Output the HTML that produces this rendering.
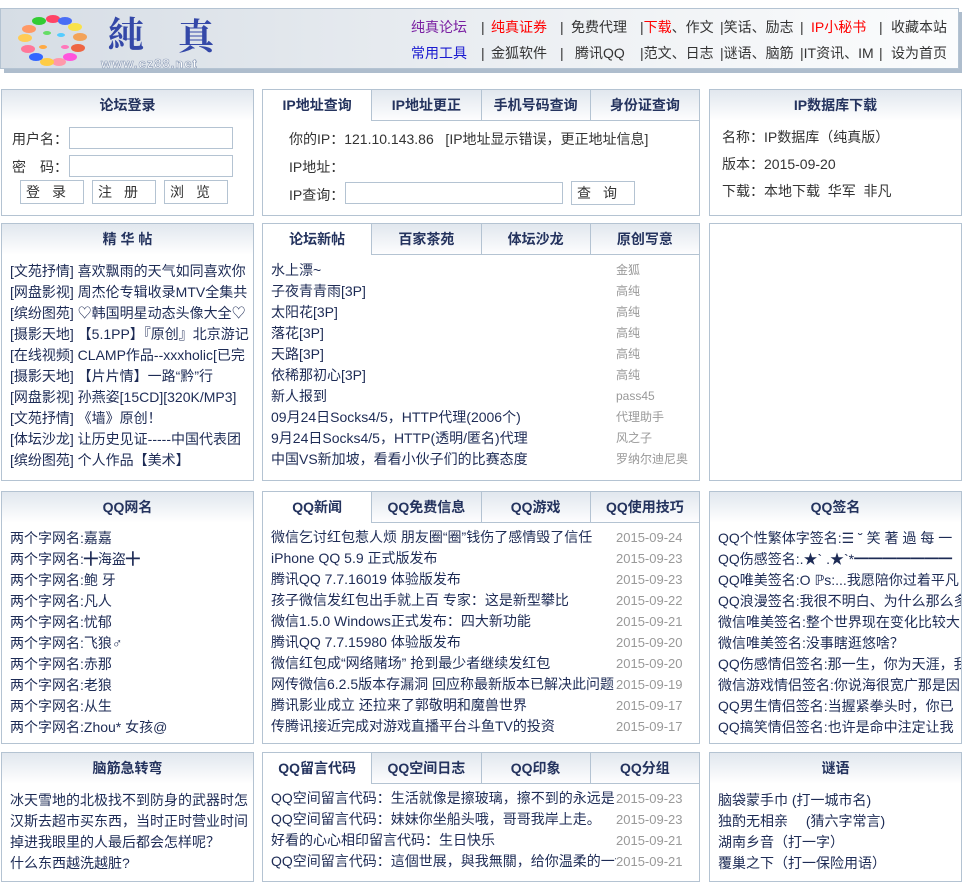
<!DOCTYPE html>
<html><head><meta charset="utf-8"><style>
*{margin:0;padding:0;box-sizing:border-box}
body{width:962px;height:875px;overflow:hidden;background:#fff;font-family:"Liberation Sans","Noto Sans CJK SC",sans-serif;font-size:14px;color:#1d2b55;position:relative}
.p{position:absolute;border:1px solid #b4c3d2;background:#fff;overflow:hidden}
.h{height:31px;line-height:30px;text-align:center;font-weight:bold;font-size:14px;color:#24335e;background:linear-gradient(#e1e7ee,#ffffff)}
.tabs{display:flex;height:31px;border-bottom:1px solid #b4c3d2;background:linear-gradient(#e1e7ee,#fdfdfe)}
.tabs div{flex:1;text-align:center;line-height:30px;font-weight:bold;color:#24335e;border-left:1px solid #b4c3d2}
.tabs div:first-child{border-left:none;background:#fff;margin-bottom:-1px;height:31px;border-right:0}
ul{list-style:none;padding:6px 0 0 8px}
li{height:21px;line-height:21px;white-space:nowrap;overflow:hidden}
.d li{display:flex}
.d li span:first-child{flex:0 0 345px;overflow:hidden}
.d li span:last-child{color:#999;font-size:13px}
.a li span:last-child{font-size:12px}
.hd{position:absolute;left:0;top:8px;width:959px;height:61px;border:1px solid #b4c3d2;background:linear-gradient(90deg,#d6dde5,#eef1f4 60%,#fbfcfd);box-shadow:4px 4px 0 #aebdcd}
.n{position:absolute;font-size:14px;color:#333;line-height:20px;white-space:nowrap}
input.t{position:absolute;height:22px;border:1px solid #b4c3d2;background:#fff}
.b{position:absolute;height:24px;border:1px solid #b4c3d2;background:#fff;text-align:center;line-height:22px;letter-spacing:12px;color:#333}
</style></head><body>
<div class="hd">
<svg width="230" height="60" style="position:absolute;left:12px;top:0">
<g transform="translate(40,32)">
<ellipse cx="0" cy="-22" rx="7" ry="4" fill="#f46"/><ellipse cx="12" cy="-20" rx="7" ry="4" fill="#4a6ef5"/><ellipse cx="22" cy="-14" rx="7" ry="4" fill="#f9e24a"/><ellipse cx="27" cy="-4" rx="7" ry="4" fill="#f3a35a"/><ellipse cx="25" cy="7" rx="7" ry="4" fill="#e64"/><ellipse cx="17" cy="16" rx="7" ry="4" fill="#f5d"/><ellipse cx="6" cy="21" rx="7" ry="4" fill="#f9a"/><ellipse cx="-6" cy="21" rx="7" ry="4" fill="#fc4"/><ellipse cx="-17" cy="16" rx="7" ry="4" fill="#36f"/><ellipse cx="-25" cy="8" rx="7" ry="4" fill="#f79"/><ellipse cx="-28" cy="-3" rx="7" ry="4" fill="#fc5"/><ellipse cx="-24" cy="-12" rx="7" ry="4" fill="#f96"/><ellipse cx="-14" cy="-20" rx="7" ry="4" fill="#3c3"/><ellipse cx="-6" cy="-8" rx="4" ry="2" fill="#6d6"/><ellipse cx="8" cy="-6" rx="4" ry="2" fill="#5cf"/><ellipse cx="12" cy="6" rx="4" ry="2" fill="#f7b"/><ellipse cx="-10" cy="6" rx="4" ry="2" fill="#fa4"/>
</g>
<text x="95" y="38" font-family="Noto Serif CJK SC,serif" font-size="36" font-weight="bold" fill="#3448a8">純</text>
<text x="165" y="40" font-family="Noto Serif CJK SC,serif" font-size="36" font-weight="bold" fill="#3448a8">真</text>
<text x="88" y="59" font-family="Liberation Sans,sans-serif" font-size="13" font-weight="bold" fill="#fff" stroke="#8a9ab5" stroke-width=".6" letter-spacing="1">www.cz88.net</text>
</svg>
</div>
<div class="n" style="top:17px;left:411px;color:#7a1fa2">纯真论坛</div>
<div class="n" style="top:17px;left:481px">|</div>
<div class="n" style="top:17px;left:491px;color:#f00">纯真证券</div>
<div class="n" style="top:17px;left:560px">|</div>
<div class="n" style="top:17px;left:571px">免费代理</div>
<div class="n" style="top:17px;left:640px">|<span style="color:#f00">下载</span>、作文</div>
<div class="n" style="top:17px;left:720px">|笑话、励志</div>
<div class="n" style="top:17px;left:800px">|</div>
<div class="n" style="top:17px;left:811px;color:#f00">IP小秘书</div>
<div class="n" style="top:17px;left:879px">|</div>
<div class="n" style="top:17px;left:891px">收藏本站</div>
<div class="n" style="top:43px;left:411px;color:#1919d0">常用工具</div>
<div class="n" style="top:43px;left:481px">|</div>
<div class="n" style="top:43px;left:491px">金狐软件</div>
<div class="n" style="top:43px;left:560px">|</div>
<div class="n" style="top:43px;left:575px">腾讯QQ</div>
<div class="n" style="top:43px;left:640px">|范文、日志</div>
<div class="n" style="top:43px;left:720px">|谜语、脑筋</div>
<div class="n" style="top:43px;left:800px">|IT资讯、IM</div>
<div class="n" style="top:43px;left:879px">|</div>
<div class="n" style="top:43px;left:891px">设为首页</div>

<!-- row1 -->
<div class="p" style="left:1px;top:89px;width:253px;height:127px"><div class="h">论坛登录</div>
<div style="position:absolute;left:10px;top:35px;line-height:28px;color:#333">用户名：<br>密　码：</div>
<input class="t" style="left:67px;top:37px;width:164px"><input class="t" style="left:67px;top:65px;width:164px">
<div class="b" style="left:18px;top:90px;width:64px">登录</div><div class="b" style="left:90px;top:90px;width:64px">注册</div><div class="b" style="left:162px;top:90px;width:64px">浏览</div></div>

<div class="p" style="left:262px;top:89px;width:438px;height:127px"><div class="tabs"><div>IP地址查询</div><div>IP地址更正</div><div>手机号码查询</div><div>身份证查询</div></div>
<div style="position:absolute;left:26px;top:35px;line-height:28px;color:#333">你的IP：121.10.143.86 &nbsp;&nbsp;[IP地址显示错误，更正地址信息]<br>IP地址：<br>IP查询：</div>
<input class="t" style="left:82px;top:92px;width:218px"><div class="b" style="left:308px;top:91px;width:64px">查询</div></div>

<div class="p" style="left:709px;top:89px;width:253px;height:127px"><div class="h">IP数据库下载</div>
<div style="position:absolute;left:12px;top:34px;line-height:27px;color:#333">名称：IP数据库（纯真版）<br>版本：2015-09-20<br>下载：本地下载 &nbsp;华军 &nbsp;非凡</div></div>

<!-- row2 -->
<div class="p" style="left:1px;top:223px;width:253px;height:258px"><div class="h">精 华 帖</div><ul style="padding-top:6px">
<li>[文苑抒情] 喜欢飘雨的天气如同喜欢你</li><li>[网盘影视] 周杰伦专辑收录MTV全集共</li><li>[缤纷图苑] ♡韩国明星动态头像大全♡</li><li>[摄影天地] 【5.1PP】『原创』北京游记</li><li>[在线视频] CLAMP作品--xxxholic[已完</li><li>[摄影天地] 【片片情】一路“黔”行</li><li>[网盘影视] 孙燕姿[15CD][320K/MP3]</li><li>[文苑抒情] 《墙》原创！</li><li>[体坛沙龙] 让历史见证-----中国代表团</li><li>[缤纷图苑] 个人作品【美术】</li></ul></div>

<div class="p d a" style="left:262px;top:223px;width:438px;height:258px"><div class="tabs"><div>论坛新帖</div><div>百家茶苑</div><div>体坛沙龙</div><div>原创写意</div></div><ul style="padding-top:5px">
<li><span>水上漂~</span><span>金狐</span></li><li><span>子夜青青雨[3P]</span><span>高纯</span></li><li><span>太阳花[3P]</span><span>高纯</span></li><li><span>落花[3P]</span><span>高纯</span></li><li><span>天路[3P]</span><span>高纯</span></li><li><span>依稀那初心[3P]</span><span>高纯</span></li><li><span>新人报到</span><span>pass45</span></li><li><span>09月24日Socks4/5，HTTP代理(2006个)</span><span>代理助手</span></li><li><span>9月24日Socks4/5，HTTP(透明/匿名)代理</span><span>风之子</span></li><li><span>中国VS新加坡，看看小伙子们的比赛态度</span><span>罗纳尔迪尼奥</span></li></ul></div>

<div class="p" style="left:709px;top:223px;width:253px;height:258px"></div>

<!-- row3 -->
<div class="p" style="left:1px;top:491px;width:253px;height:253px"><div class="h">QQ网名</div><ul style="padding-top:5px">
<li>两个字网名:嘉嘉</li><li>两个字网名:╋海盗╋</li><li>两个字网名:鲍  牙</li><li>两个字网名:凡人</li><li>两个字网名:忧郁</li><li>两个字网名:飞狼♂</li><li>两个字网名:赤那</li><li>两个字网名:老狼</li><li>两个字网名:从生</li><li>两个字网名:Zhou* 女孩@</li></ul></div>

<div class="p d" style="left:262px;top:491px;width:438px;height:253px"><div class="tabs"><div>QQ新闻</div><div>QQ免费信息</div><div>QQ游戏</div><div>QQ使用技巧</div></div><ul style="padding-top:4px">
<li><span>微信乞讨红包惹人烦 朋友圈“圈”钱伤了感情毁了信任</span><span>2015-09-24</span></li><li><span>iPhone QQ 5.9 正式版发布</span><span>2015-09-23</span></li><li><span>腾讯QQ 7.7.16019 体验版发布</span><span>2015-09-23</span></li><li><span>孩子微信发红包出手就上百 专家：这是新型攀比</span><span>2015-09-22</span></li><li><span>微信1.5.0 Windows正式发布：四大新功能</span><span>2015-09-21</span></li><li><span>腾讯QQ 7.7.15980 体验版发布</span><span>2015-09-20</span></li><li><span>微信红包成“网络赌场” 抢到最少者继续发红包</span><span>2015-09-20</span></li><li><span>网传微信6.2.5版本存漏洞 回应称最新版本已解决此问题</span><span>2015-09-19</span></li><li><span>腾讯影业成立 还拉来了郭敬明和魔兽世界</span><span>2015-09-17</span></li><li><span>传腾讯接近完成对游戏直播平台斗鱼TV的投资</span><span>2015-09-17</span></li></ul></div>

<div class="p" style="left:709px;top:491px;width:253px;height:253px"><div class="h">QQ签名</div><ul style="padding-top:5px">
<li>QQ个性繁体字签名:☰ ˘ 笑 著 過 每 一</li><li>QQ伤感签名:.★` .★`*━━━━━━━</li><li>QQ唯美签名:O ℙs:...我愿陪你过着平凡</li><li>QQ浪漫签名:我很不明白、为什么那么多</li><li>微信唯美签名:整个世界现在变化比较大</li><li>微信唯美签名:没事瞎逛悠啥？</li><li>QQ伤感情侣签名:那一生，你为天涯，我</li><li>微信游戏情侣签名:你说海很宽广那是因</li><li>QQ男生情侣签名:当握紧拳头时，你已</li><li>QQ搞笑情侣签名:也许是命中注定让我</li></ul></div>

<!-- row4 -->
<div class="p" style="left:1px;top:752px;width:253px;height:130px"><div class="h">脑筋急转弯</div><ul>
<li>冰天雪地的北极找不到防身的武器时怎</li><li>汉斯去超市买东西，当时正时营业时间</li><li>掉进我眼里的人最后都会怎样呢？</li><li>什么东西越洗越脏?</li></ul></div>

<div class="p d" style="left:262px;top:752px;width:438px;height:130px"><div class="tabs"><div>QQ留言代码</div><div>QQ空间日志</div><div>QQ印象</div><div>QQ分组</div></div><ul style="padding-top:4px">
<li><span>QQ空间留言代码：生活就像是擦玻璃，擦不到的永远是</span><span>2015-09-23</span></li><li><span>QQ空间留言代码：妹妹你坐船头哦，哥哥我岸上走。</span><span>2015-09-23</span></li><li><span>好看的心心相印留言代码：生日快乐</span><span>2015-09-21</span></li><li><span>QQ空间留言代码：這個世展，與我無關，给你温柔的一切</span><span>2015-09-21</span></li></ul></div>

<div class="p" style="left:709px;top:752px;width:253px;height:130px"><div class="h">谜语</div><ul>
<li>脑袋蒙手巾 (打一城市名)</li><li>独酌无相亲 　(猜六字常言)</li><li>湖南乡音（打一字）</li><li>覆巢之下（打一保险用语）</li></ul></div>
</body></html>
